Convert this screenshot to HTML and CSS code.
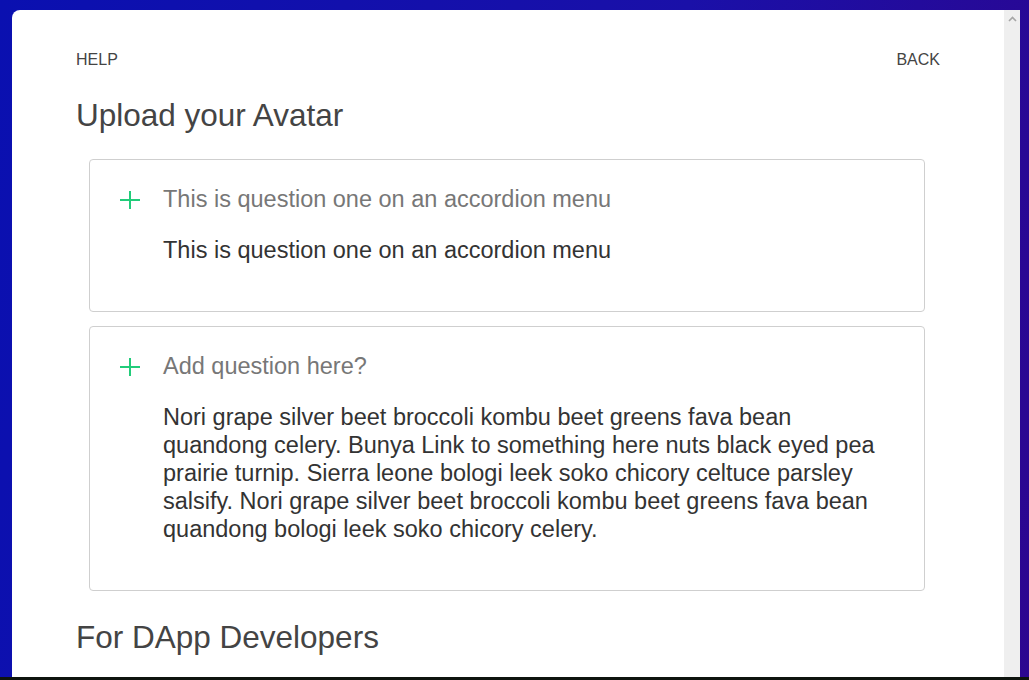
FILE: index.html
```html
<!DOCTYPE html>
<html lang="en">
<head>
<meta charset="utf-8">
<title>Upload your Avatar</title>
<link rel="stylesheet" href="styles.css">
</head>
<body>
<div class="screen">
  <div class="card">
    <div class="content">
      <nav class="topnav">
        <a class="navlink" href="#">HELP</a>
        <a class="navlink" href="#">BACK</a>
      </nav>
      <h2 class="section-title">Upload your Avatar</h2>
      <div class="accordion">
        <div class="acc-item">
          <div class="acc-head">
            <svg class="plus" width="20" height="20" viewBox="0 0 20 20"><path d="M10 1v18M0 10h20" stroke="#22cc7a" stroke-width="2" fill="none"/></svg>
            <span class="acc-q">This is question one on an accordion menu</span>
          </div>
          <p class="acc-a">This is question one on an accordion menu</p>
        </div>
        <div class="acc-item">
          <div class="acc-head">
            <svg class="plus" width="20" height="20" viewBox="0 0 20 20"><path d="M10 1v18M0 10h20" stroke="#22cc7a" stroke-width="2" fill="none"/></svg>
            <span class="acc-q">Add question here?</span>
          </div>
          <p class="acc-a">Nori grape silver beet broccoli kombu beet greens fava bean quandong celery. Bunya Link to something here nuts black eyed pea prairie turnip. Sierra leone bologi leek soko chicory celtuce parsley salsify. Nori grape silver beet broccoli kombu beet greens fava bean quandong bologi leek soko chicory celery.</p>
        </div>
      </div>
      <h2 class="section-title second">For DApp Developers</h2>
    </div>
    <div class="scrollbar">
      <svg class="arrow" width="9" height="6" viewBox="0 0 9 6"><path d="M1 5L4.5 1.5L8 5" stroke="#a6a6a6" stroke-width="1.6" fill="none"/></svg>
    </div>
  </div>
  <div class="taskbar"></div>
</div>
</body>
</html>
```
FILE: styles.css
```css
html, body {
  margin: 0;
  padding: 0;
  height: 680px;
  overflow: hidden;
}
body {
  font-family: "Liberation Sans", Arial, sans-serif;
  background: linear-gradient(100deg, #0a10b0 0%, #1a10a8 60%, #2c0690 100%);
}
.screen {
  height: 680px;
  display: flex;
  flex-direction: column;
  padding: 10px 9px 0 12px;
  box-sizing: border-box;
}
.card {
  flex: 1;
  display: flex;
  background: #fff;
  border-radius: 8px 0 0 0;
  overflow: hidden;
  min-height: 0;
}
.content {
  flex: 1;
  padding: 41px 64px 0 64px;
  min-width: 0;
}
.scrollbar {
  width: 16px;
  background: #efefef;
  display: flex;
  justify-content: center;
  align-items: flex-start;
  padding-top: 6px;
  box-sizing: border-box;
}
.taskbar {
  height: 3px;
  margin: 0 -9px 0 -12px;
  background: #0e140e;
}
.topnav {
  display: flex;
  justify-content: space-between;
}
.navlink {
  font-size: 16px;
  line-height: 18px;
  color: #444;
  text-decoration: none;
}
.section-title {
  margin: 28px 0 0 0;
  font-size: 31.5px;
  line-height: 36px;
  font-weight: normal;
  color: #444;
}
.section-title.second {
  margin-top: 28px;
}
.accordion {
  margin: 26px 15px 0 13px;
  display: flex;
  flex-direction: column;
  gap: 14px;
}
.acc-item {
  border: 1px solid #cfcfcf;
  border-radius: 4px;
  padding: 25px 30px 47px 30px;
}
.acc-head {
  display: flex;
  align-items: center;
  gap: 23px;
}
.plus {
  flex: none;
  margin-top: 1px;
}
.acc-q {
  font-size: 23.5px;
  line-height: 28px;
  color: #777;
}
.acc-a {
  margin: 23px 0 0 43px;
  font-size: 23.5px;
  line-height: 28px;
  color: #333;
}
```
